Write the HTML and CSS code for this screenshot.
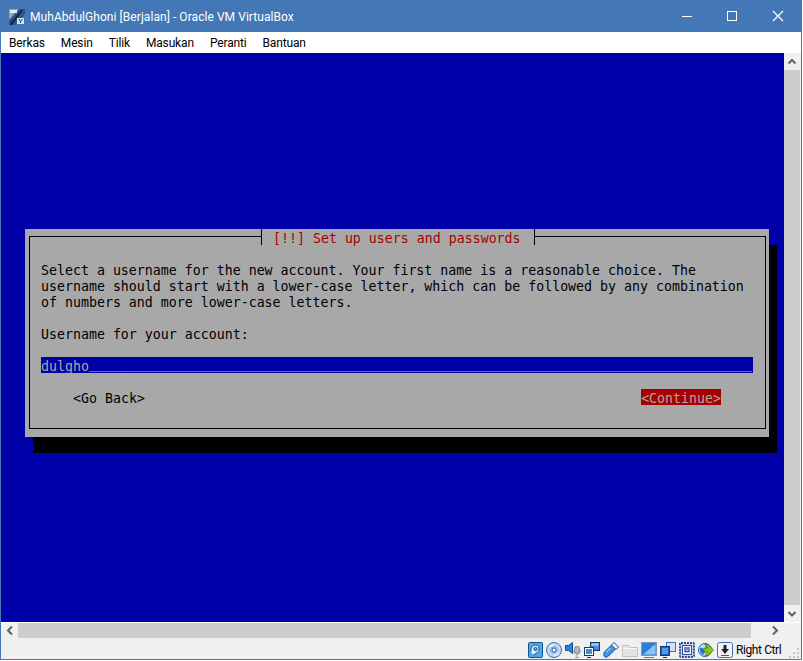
FILE: index.html
```html
<!DOCTYPE html>
<html lang="id">
<head>
<meta charset="utf-8">
<title>MuhAbdulGhoni [Berjalan] - Oracle VM VirtualBox</title>
<link rel="stylesheet" href="styles.css">
</head>
<body>
<div class="window">
  <header class="titlebar">
    <svg class="app-icon" viewBox="0 0 16 16" width="16" height="16">
      <rect width="16" height="16" fill="#2c5586"/>
      <path d="M0 0h10L0 11z" fill="#8ea3bc"/>
      <path d="M16 16H6l10-11z" fill="#3a78bd"/>
      <rect x="1" y="1" width="7" height="3" fill="#e8edf3"/>
      <path d="M1 15L12 1h2L3 16H1z" fill="#10243d"/>
      <path d="M8 9h7v6H8z" fill="#d5e4f3"/>
      <path d="M10 10l1.500 2.500L13.500 10M11.500 12.500V14" stroke="#17385f" fill="none"/>
    </svg>
    <span class="title-text">MuhAbdulGhoni [Berjalan] - Oracle VM VirtualBox</span>
    <div class="controls">
      <svg class="ctl" viewBox="0 0 46 31" width="46" height="31"><path d="M19 15.500h10" stroke="#fff"/></svg>
      <svg class="ctl" viewBox="0 0 46 31" width="46" height="31"><rect x="18.500" y="10.500" width="9" height="9" fill="none" stroke="#fff"/></svg>
      <svg class="ctl" viewBox="0 0 46 31" width="46" height="31"><path d="M18 10l10 10M28 10L18 20" stroke="#fff" stroke-width="1.200"/></svg>
    </div>
  </header>

  <nav class="menubar">
    <span class="menu-item">Berkas</span>
    <span class="menu-item">Mesin</span>
    <span class="menu-item">Tilik</span>
    <span class="menu-item">Masukan</span>
    <span class="menu-item">Peranti</span>
    <span class="menu-item">Bantuan</span>
  </nav>

  <div class="main">
    <div class="screen">
      <section class="dialog">
        <div class="frame">
          <div class="dialog-title">[!!] Set up users and passwords</div>
          <p class="line">Select a username for the new account. Your first name is a reasonable choice. The</p>
          <p class="line">username should start with a lower-case letter, which can be followed by any combination</p>
          <p class="line">of numbers and more lower-case letters.</p>
          <p class="line gap">Username for your account:</p>
          <div class="line gap field">dulgho<span class="field-rest">___________________________________________________________________________________</span></div>
          <div class="line gap buttons">
            <span>&lt;Go Back&gt;</span>
            <span class="btn-active">&lt;Continue&gt;</span>
          </div>
        </div>
      </section>
    </div>
    <aside class="vscroll">
      <svg class="arrow" viewBox="0 0 17 17" width="17" height="17"><path d="M4.500 10.500L8 7l3.500 3.500" fill="none" stroke="#606060" stroke-width="2"/></svg>
      <div class="vthumb"></div>
      <svg class="arrow" viewBox="0 0 17 17" width="17" height="17"><path d="M4.500 7L8 10.500 11.500 7" fill="none" stroke="#606060" stroke-width="2"/></svg>
    </aside>
  </div>

  <div class="hscroll">
    <svg class="arrow" viewBox="0 0 17 15" width="17" height="15"><path d="M11 3.500L7 7.500l4 4" fill="none" stroke="#606060" stroke-width="2"/></svg>
    <div class="hthumb"></div>
    <svg class="arrow" viewBox="0 0 17 15" width="17" height="15"><path d="M6 3.500l4 4-4 4" fill="none" stroke="#606060" stroke-width="2"/></svg>
  </div>

  <footer class="statusbar">
    <svg class="sicon" viewBox="0 0 16 16" width="16" height="16"><rect x="1.500" y=".5" width="14" height="15" rx="1" fill="#4fa6ec" stroke="#14528f"/><path d="M4 10C3 5.500 6.500 2.500 9.500 3.200c3 .8 3.300 5.300.8 7.300-1.500 1.200-3 2-4 2.500" fill="#e4f3fd" stroke="#12508d"/><circle cx="8.500" cy="7" r="1.600" fill="#4fa6ec" stroke="#12508d"/></svg>
    <svg class="sicon" viewBox="0 0 16 16" width="16" height="16"><circle cx="8" cy="8" r="7.500" fill="#bcd9f6" stroke="#3b74c0"/><path d="M3 4.500a6.500 6.500 0 0 1 5-2.500v6zM13 11.500a6.500 6.500 0 0 1-5 2.500V8z" fill="#f4ecfb"/><circle cx="8" cy="8" r="4" fill="#8fbcec"/><circle cx="8" cy="8" r="2" fill="#fff" stroke="#2d62a8"/></svg>
    <svg class="sicon" viewBox="0 0 16 16" width="16" height="16"><path d="M.5 3.500h3l4-3v11l-4-3h-3z" fill="#1f84e4" stroke="#14528f"/><rect x="9.500" y="4.500" width="5" height="7" rx="2" fill="#b4b4b4" stroke="#8a8a8a"/><path d="M12 12v3M10 15.500h4M8.500 8.500c0 5 7 5 7 0" stroke="#a0a0a0" fill="none"/></svg>
    <svg class="sicon" viewBox="0 0 16 16" width="16" height="16"><rect x="6.500" y=".5" width="9" height="8" fill="#3f8fe0" stroke="#123a6e"/><rect x="7.500" y="1.500" width="7" height="2" fill="#a9d2f5"/><rect x=".5" y="5.500" width="9" height="8" fill="#fff" stroke="#123a6e"/><rect x="2" y="7" width="6" height="5" fill="#3f8fe0"/><path d="M3 15.500h4" stroke="#123a6e"/></svg>
    <svg class="sicon" viewBox="0 0 16 16" width="16" height="16"><path d="M1.500 10l7-7 4 4-7 7c-2 1.500-3 1.500-4 .5s-1-2.500 0-4.500z" fill="#3f96ea" stroke="#14528f"/><path d="M8.500 3L11 .5l4.500 4.500L13 7.500z" fill="#f4f4f4" stroke="#14528f"/><path d="M3.500 10l4-4" stroke="#c4e2fb"/></svg>
    <svg class="sicon" viewBox="0 0 16 16" width="16" height="16"><path d="M.5 14.500V3.500h6l1 2h8v9z" fill="#e4e4e4" stroke="#c0c0c0"/><path d="M1.500 6.500h13" stroke="#f8f8f8"/></svg>
    <svg class="sicon" viewBox="0 0 16 16" width="16" height="16"><rect x=".5" y=".5" width="15" height="13" fill="#2a80de" stroke="#7f97b5"/><path d="M2 12.500L14.500 2v10.500z" fill="#8cc4f4"/><path d="M3 15.500h10" stroke="#5c7ea8"/></svg>
    <svg class="sicon" viewBox="0 0 16 16" width="16" height="16"><rect x="6.500" y=".5" width="9" height="9" fill="#cfe2f6" stroke="#3f6fb0"/><rect x=".5" y="4.500" width="9" height="9" fill="#1d5fbe" stroke="#123a6e"/><rect x="2" y="6" width="6" height="6" fill="#4c9be8"/><path d="M3 15.500h4" stroke="#123a6e"/></svg>
    <svg class="sicon" viewBox="0 0 16 16" width="16" height="16"><rect x="1" y="1" width="14" height="14" rx="1" fill="#c7d6f5" stroke="#2d4c9a" stroke-width="2" stroke-dasharray="2 1"/><rect x="3.500" y="3.500" width="9" height="9" fill="#f2f6fd" stroke="#2d4c9a"/><path d="M6 5v4.500h4V5M8 5v3" fill="none" stroke="#2d4c9a" stroke-width="1.300"/></svg>
    <svg class="sicon" viewBox="0 0 16 16" width="16" height="16"><circle cx="7" cy="8" r="6.500" fill="#bddcf6" stroke="#2a66a8"/><path d="M2 6c3-1 4 1 5 4l-2 3C3 12 1 9 2 6zM7 2c2 0 3 1 4 2L8 6z" fill="#2f78c6"/><path d="M7 2.500h3l5.500 5.500-5.500 5.500H7l3-3.500H6V6h4z" fill="#86cc22" stroke="#3f7a10" stroke-width=".8"/></svg>
    <svg class="sicon" viewBox="0 0 16 16" width="16" height="16"><rect x=".5" y=".5" width="15" height="15" rx="2" fill="#f0f4fa" stroke="#3f6fb0"/><path d="M6.500 3h3v4H12l-4 5-4-5h2.500z" fill="#222"/><path d="M4 13.500h8" stroke="#555"/></svg>
    <span class="host-key">Right Ctrl</span>
    <svg class="grip" viewBox="0 0 12 12" width="12" height="12"><path d="M9 1h2v2H9zM5 5h2v2H5zM9 5h2v2H9zM1 9h2v2H1zM5 9h2v2H5zM9 9h2v2H9z" fill="#c4c4c4"/></svg>
  </footer>
</div>
</body>
</html>
```

FILE: styles.css
```css
* { box-sizing: border-box; }
html, body { margin: 0; padding: 0; background: #fff; }

.window {
  width: 802px;
  height: 660px;
  display: flex;
  flex-direction: column;
  border: 1px solid #4377b5;
  background: #f0f0f0;
  font-family: Roboto, "Noto Sans", sans-serif;
  font-size: 12px;
  overflow: hidden;
}

.titlebar {
  height: 31px;
  flex: none;
  display: flex;
  align-items: center;
  background: #4377b5;
  color: #fff;
  padding-left: 8px;
}
.app-icon { flex: none; margin-right: 5px; }
.title-text { white-space: nowrap; letter-spacing: 0.06px; }
.controls { margin-left: auto; display: flex; }
.ctl { display: block; }

.menubar {
  height: 21px;
  flex: none;
  display: flex;
  align-items: center;
  background: #fff;
  color: #000;
}
.menu-item { padding: 0 8px; white-space: nowrap; letter-spacing: -0.15px; }

.main { height: 569px; flex: none; display: flex; }

.screen {
  width: 783px;
  flex: none;
  background: #0000a8;
  padding: 176px 0 0 24px;
  overflow: hidden;
}

.dialog {
  width: 744px;
  height: 208px;
  padding: 7px 3px 8px 4px;
  background: #a8a8a8;
  box-shadow: 8px 16px 0 #000;
  font-family: "DejaVu Sans Mono", "Liberation Mono", monospace;
  font-size: 13.28px;
  color: #000;
}
.frame {
  position: relative;
  height: 193px;
  border: 1px solid #000;
  padding: 24px 0 0 11px;
}
.dialog-title {
  position: absolute;
  left: 231px;
  top: -8px;
  width: 274px;
  height: 16px;
  padding-left: 11px;
  background: #a8a8a8;
  border-left: 1px solid #000;
  border-right: 1px solid #000;
  color: #a80000;
  line-height: 20px;
  white-space: pre;
}
.line { margin: 0; height: 16px; line-height: 20px; white-space: pre; }
.gap { margin-top: 16px; }
.field {
  width: 712px;
  background: #0000a8;
  color: #a8a8a8;
  overflow: hidden;
}
.field-rest { display: inline-block; transform: translateY(-3px); }
.buttons {
  width: 712px;
  display: flex;
  justify-content: space-between;
  padding: 0 32px;
}
.btn-active { height: 16px; background: #a80000; color: #a8a8a8; }

.vscroll {
  flex: 1;
  display: flex;
  flex-direction: column;
}
.arrow { display: block; flex: none; }
.vthumb { flex: 1; background: #cdcdcd; margin-right: 1px; }

.hscroll {
  height: 18px;
  flex: none;
  display: flex;
  align-items: flex-start;
  border-top: 1px solid #fff;
  padding-right: 17px;
}
.hthumb { width: 733px; height: 15px; background: #cdcdcd; margin-right: 16px; }

.statusbar {
  height: 19px;
  flex: none;
  display: flex;
  align-items: center;
  padding: 1px 0 0 526px;
  gap: 3px;
}
.sicon { display: block; flex: none; }
.host-key { white-space: nowrap; color: #000; letter-spacing: -0.4px; }
.grip { flex: none; margin-left: auto; margin-right: 1px; align-self: flex-end; }
```
